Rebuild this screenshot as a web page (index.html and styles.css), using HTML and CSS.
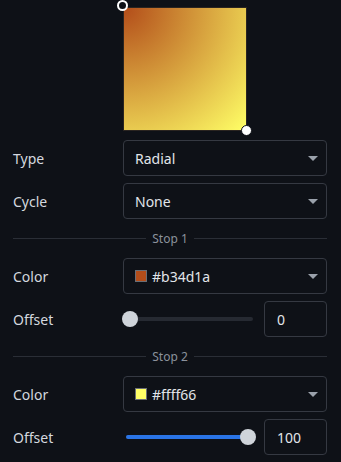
FILE: index.html
```html
<!DOCTYPE html>
<html>
<head>
<meta name="viewport" content="width=device-width, initial-scale=1">
<link rel="stylesheet" href="styles.css">
</head>
<body>

<div class="panel">
  <div class="row preview-row">
    <div></div>
    <div class="preview">
      <div class="swatch-big"></div>
      <span class="handle handle-start"></span>
      <span class="handle handle-end"></span>
    </div>
  </div>

  <div class="row">
    <label>Type</label>
    <div class="select"><span class="value">Radial</span><span class="arrow"></span></div>
  </div>
  <div class="row">
    <label>Cycle</label>
    <div class="select"><span class="value">None</span><span class="arrow"></span></div>
  </div>

  <div class="divider"><span>Stop 1</span></div>

  <div class="row">
    <label>Color</label>
    <div class="select"><span class="value"><i class="chip chip-1"></i>#b34d1a</span><span class="arrow"></span></div>
  </div>
  <div class="row">
    <label>Offset</label>
    <div class="offset">
      <div class="slider">
        <div class="track"><div class="fill" style="width:0%"></div></div>
        <span class="thumb" style="left:0%"></span>
      </div>
      <div class="num">0</div>
    </div>
  </div>

  <div class="divider"><span>Stop 2</span></div>

  <div class="row">
    <label>Color</label>
    <div class="select"><span class="value"><i class="chip chip-2"></i>#ffff66</span><span class="arrow"></span></div>
  </div>
  <div class="row">
    <label>Offset</label>
    <div class="offset">
      <div class="slider">
        <div class="track"><div class="fill" style="width:100%"></div></div>
        <span class="thumb" style="left:100%"></span>
      </div>
      <div class="num">100</div>
    </div>
  </div>
</div>

</body>
</html>
```

FILE: styles.css
```css
html, body {
  margin: 0;
  padding: 0;
  background: #0e1117;
}

body {
  font-family: "Noto Sans", "Open Sans", sans-serif;
  font-size: 14px;
  color: #d4d8df;
}

.panel {
  display: flex;
  flex-direction: column;
  gap: 7px;
  padding: 0 14px 0 13px;
}

.row {
  display: grid;
  grid-template-columns: 110px 1fr;
  align-items: center;
}

.row label {
  color: #d4d8df;
}

/* gradient preview */
.preview-row {
  padding-top: 7px;
  padding-bottom: 2px;
}

.preview {
  position: relative;
  width: 124px;
  height: 124px;
}

.swatch-big {
  width: 100%;
  height: 100%;
  box-sizing: border-box;
  border: 1px solid #2a2420;
  background: radial-gradient(circle farthest-corner at 0 0, #b34d1a 0%, #ffff66 100%);
}

.handle {
  position: absolute;
  width: 11px;
  height: 11px;
  border-radius: 50%;
  box-sizing: border-box;
}

.handle-start {
  left: -6px;
  top: -7px;
  background: #0e1117;
  border: 2px solid #ffffff;
}

.handle-end {
  right: -5px;
  bottom: -5px;
  background: #ffffff;
  border: 1px solid #0e1117;
}

/* selects */
.select {
  height: 36px;
  box-sizing: border-box;
  border: 1px solid #353942;
  border-radius: 4px;
  display: flex;
  align-items: center;
  justify-content: space-between;
  padding: 0 8px 0 11px;
  color: #e2e5ea;
}

.value {
  display: flex;
  align-items: center;
}

.arrow {
  width: 0;
  height: 0;
  border-left: 5px solid transparent;
  border-right: 5px solid transparent;
  border-top: 5px solid #9aa1ab;
}

.chip {
  display: inline-block;
  width: 12px;
  height: 12px;
  box-sizing: border-box;
  border: 1px solid #6a6e76;
  margin-right: 5px;
}

.chip-1 { background: #b34d1a; }
.chip-2 { background: #ffff66; }

/* stop dividers */
.divider {
  height: 25px;
  display: flex;
  align-items: center;
  font-size: 12px;
  color: #8b929c;
}

.divider::before,
.divider::after {
  content: "";
  flex: 1;
  height: 1px;
  background: #2a2e36;
}

.divider span {
  padding: 0 6px;
}

/* offset slider */
.offset {
  display: flex;
  align-items: center;
  gap: 11px;
}

.slider {
  position: relative;
  flex: 1;
  height: 16px;
  display: flex;
  align-items: center;
  padding: 0 0 0 0;
}

.track {
  width: 100%;
  height: 4px;
  border-radius: 2px;
  background: #262a32;
  margin: 0 0 0 3px;
}

.fill {
  height: 100%;
  border-radius: 2px;
  background: #2a74e6;
}

.thumb {
  position: absolute;
  top: 0;
  width: 16px;
  height: 16px;
  margin-left: -1px;
  border-radius: 50%;
  background: #cfd4da;
}

.slider .thumb[style*="100%"] {
  margin-left: -13px;
}

.num {
  width: 63px;
  height: 36px;
  box-sizing: border-box;
  border: 1px solid #353942;
  border-radius: 4px;
  display: flex;
  align-items: center;
  padding-left: 12px;
  color: #e2e5ea;
}
```
